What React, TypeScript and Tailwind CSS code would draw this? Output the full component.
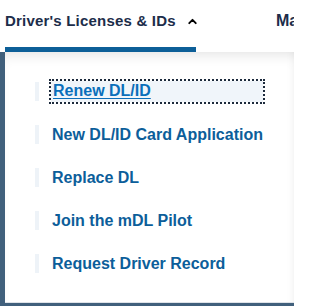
import { ChevronUp } from 'lucide-react'

const links = [
  'Renew DL/ID',
  'New DL/ID Card Application',
  'Replace DL',
  'Join the mDL Pilot',
  'Request Driver Record',
]

export default function App() {
  return (
    <div
      className="w-[294px] h-[306px] overflow-hidden bg-[#41607c]"
      style={{ fontFamily: '"Liberation Sans", Arial, sans-serif' }}
    >
      {/* Top nav */}
      <div className="h-[52px] bg-white flex pl-[5px] gap-[80px] whitespace-nowrap overflow-hidden">
        <div className="relative w-[191px] shrink-0 flex items-start pt-[12px] gap-[10px]">
          <span className="text-[15px] leading-[18px] font-bold text-[#1c2d4a] tracking-[0.2px]">
            Driver's Licenses &amp; IDs
          </span>
          <ChevronUp className="w-[13px] h-[13px] mt-[3px] shrink-0 text-black" strokeWidth={3.5} />
          <div className="absolute left-0 right-0 bottom-0 h-[5px] bg-[#0d5f98]" />
        </div>
        <div className="pt-[12px] text-[16px] leading-[18px] font-bold text-[#1c2d4a]">Make</div>
      </div>

      {/* Dropdown panel */}
      <div className="ml-[5px] h-[251px] bg-white border-b border-[#dfe3e8] shadow-[inset_0_10px_14px_-8px_rgba(0,0,0,0.12),inset_-8px_0_10px_-8px_rgba(0,0,0,0.06)]">
        <ul className="pt-[30px] pl-[30px] flex flex-col gap-[24px]">
          {links.map((label, i) => (
            <li key={label} className="flex items-stretch h-[19px]">
              <span className="w-[4px] bg-[#eef3f8] shrink-0" />
              <span
                className={
                  i === 0
                    ? 'ml-[12px] w-[212px] -my-[1px] outline-dotted outline-2 outline-[#1c2a3c] bg-[#f0f5fa] pl-[2px] text-[16px] leading-[20px] font-bold text-[#0b6fba] underline underline-offset-[2px] whitespace-nowrap'
                    : 'ml-[13px] text-[16px] leading-[19px] font-bold text-[#0c5e9a] whitespace-nowrap'
                }
              >
                {label}
              </span>
            </li>
          ))}
        </ul>
      </div>
    </div>
  )
}
